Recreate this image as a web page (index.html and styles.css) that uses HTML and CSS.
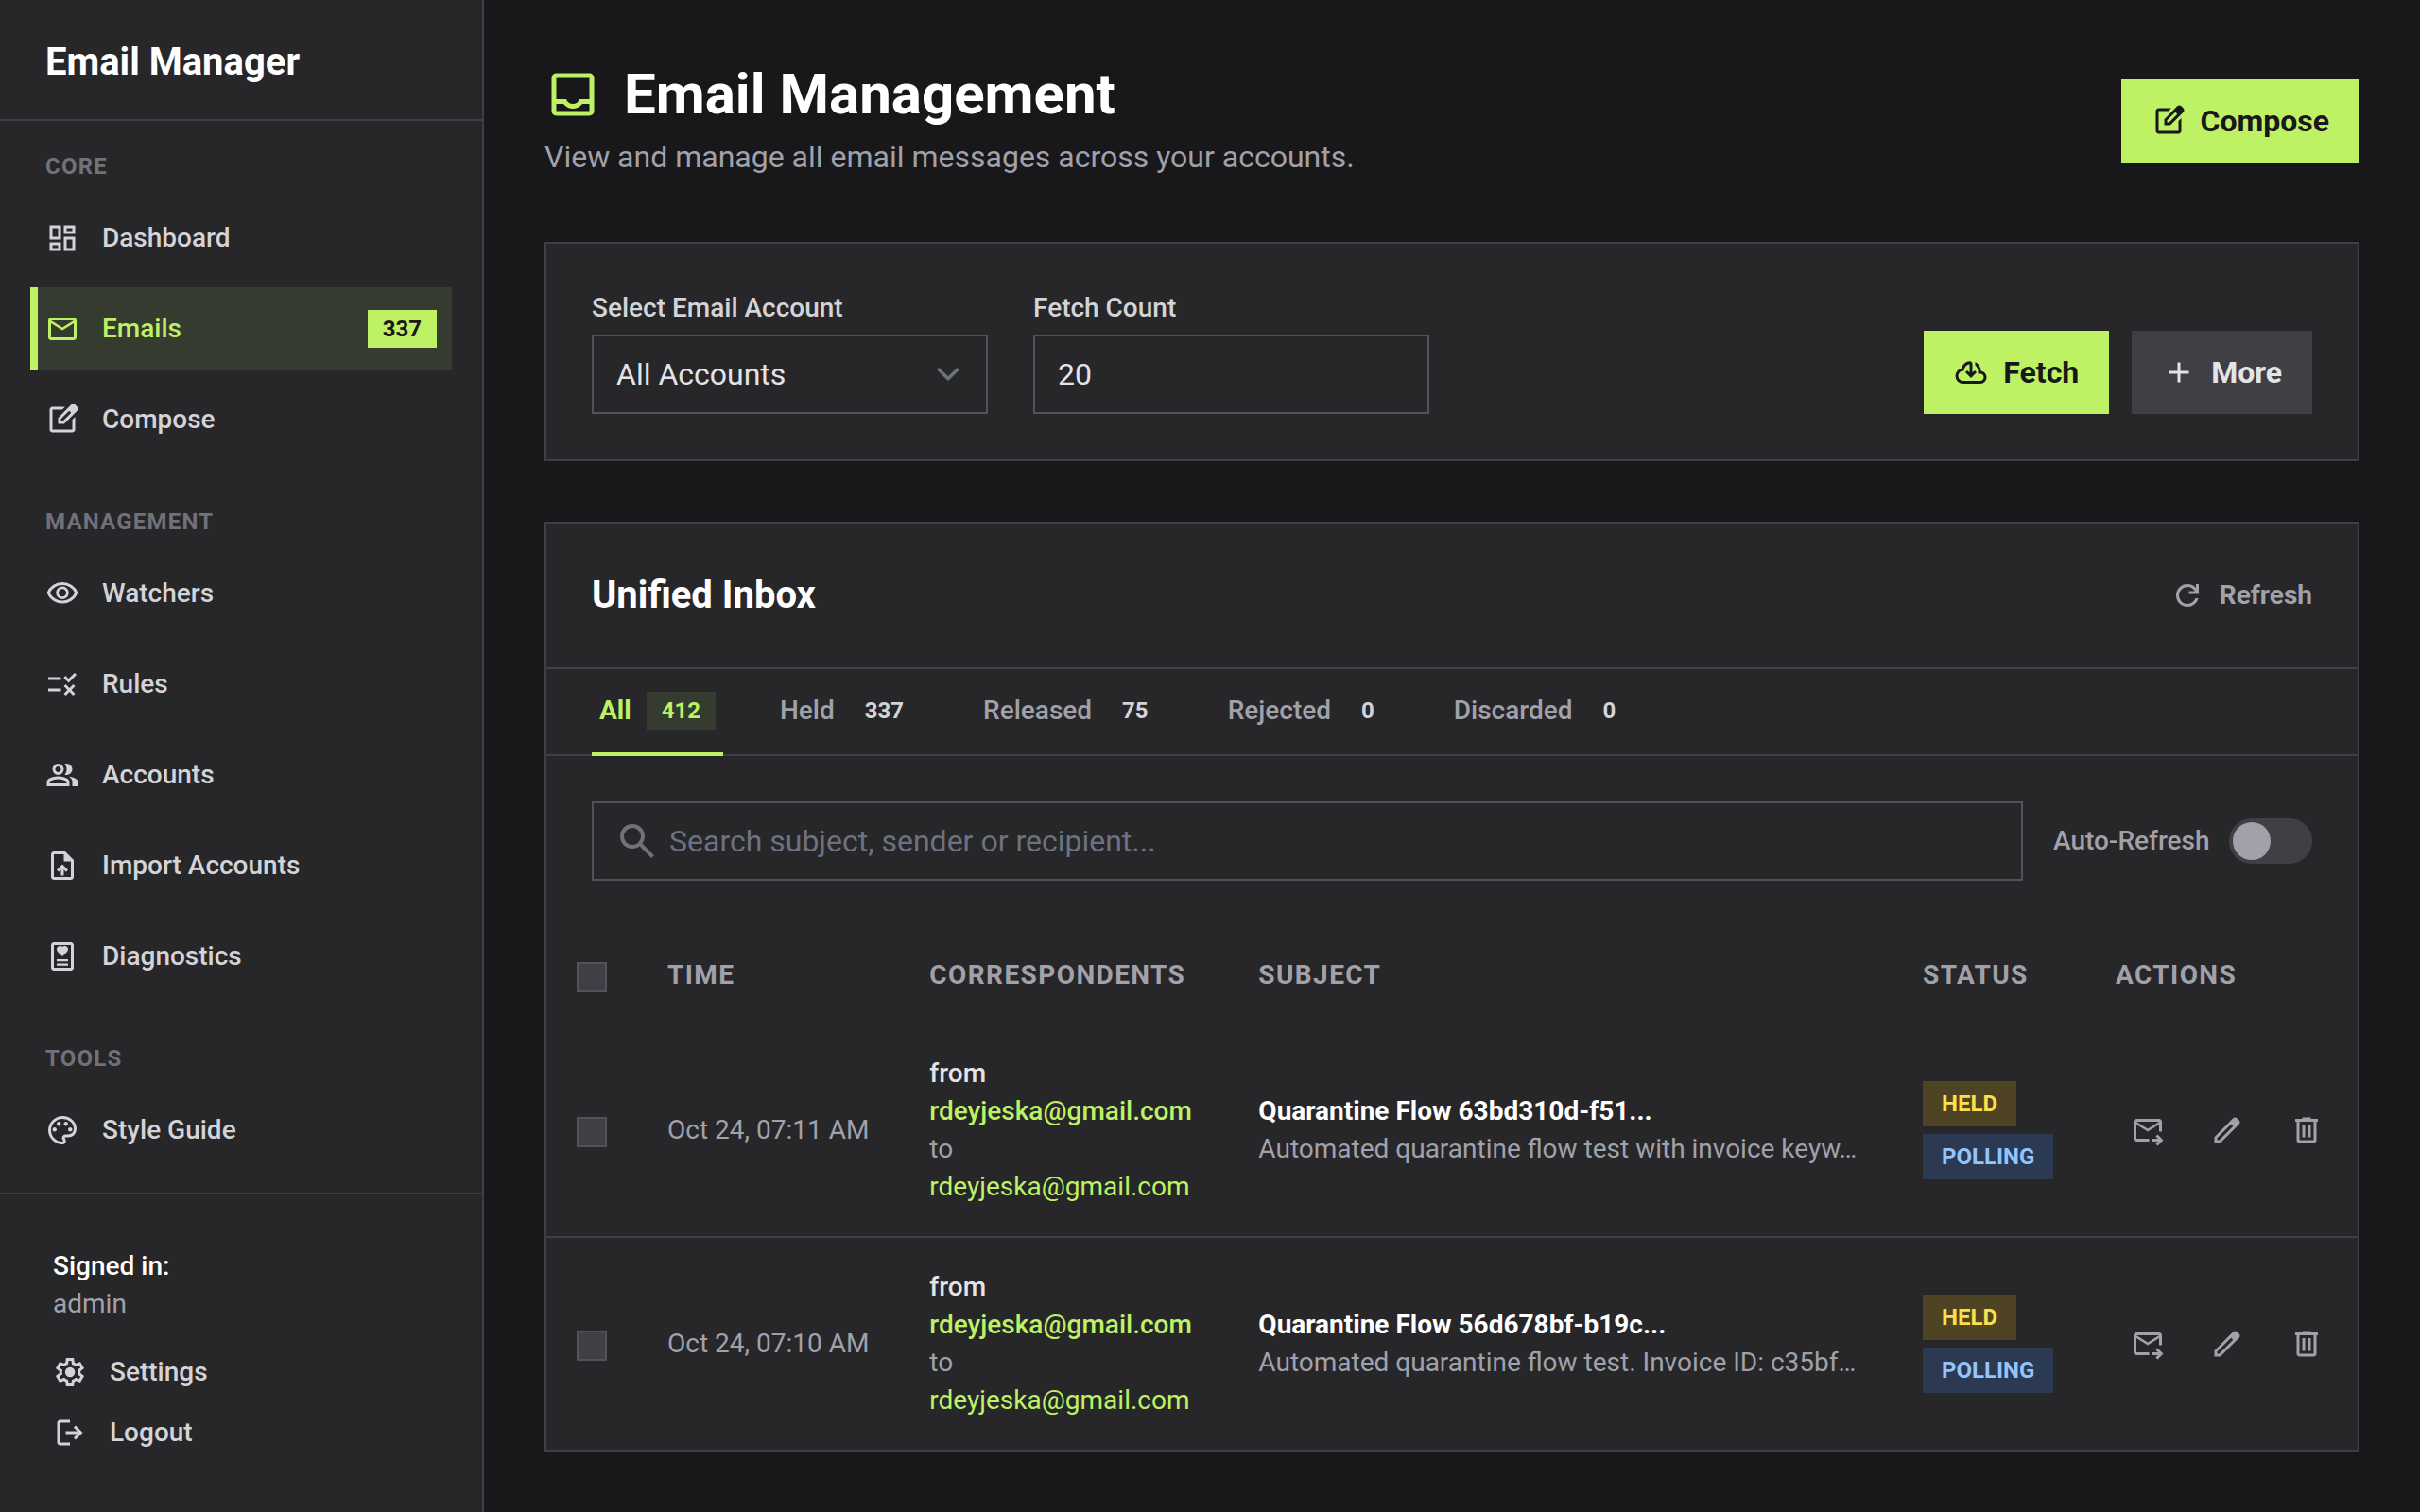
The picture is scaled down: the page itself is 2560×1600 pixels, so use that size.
FILE: index.html
```html
<!DOCTYPE html>
<html lang="en">
<head>
<meta charset="utf-8">
<title>Email Management</title>
<link rel="stylesheet" href="styles.css">
</head>
<body>
<svg class="sprite" aria-hidden="true">
  <symbol id="i-dashboard" viewBox="0 -960 960 960"><path d="M520-600v-240h320v240H520ZM120-440v-400h320v400H120Zm400 320v-400h320v400H520Zm-400 0v-240h320v240H120Zm80-400h160v-240H200v240Zm400 320h160v-240H600v240Zm0-480h160v-80H600v80ZM200-200h160v-80H200v80Z"/></symbol>
  <symbol id="i-mail" viewBox="0 -960 960 960"><path d="M160-160q-33 0-56.5-23.5T80-240v-480q0-33 23.5-56.5T160-800h640q33 0 56.5 23.5T880-720v480q0 33-23.5 56.5T800-160H160Zm320-280L160-640v400h640v-400L480-440Zm0-80 320-200H160l320 200ZM160-640v-80 480-400Z"/></symbol>
  <symbol id="i-compose" viewBox="0 -960 960 960"><path d="M200-120q-33 0-56.5-23.5T120-200v-560q0-33 23.5-56.5T200-840h357l-80 80H200v560h560v-278l80-80v358q0 33-23.5 56.5T760-120H200Zm280-360ZM360-360v-170l367-367q12-12 27-18t30-6q16 0 30.5 6t26.5 18l56 57q11 12 17 26.5t6 29.5q0 15-5.5 29.5T897-728L530-360H360Zm481-424-56-56 56 56ZM440-440h56l232-232-28-28-29-28-231 231v57Zm260-260-29-28 29 28 28 28-28-28Z"/></symbol>
  <symbol id="i-eye" viewBox="0 -960 960 960"><path d="M480-320q75 0 127.5-52.5T660-500q0-75-52.5-127.5T480-680q-75 0-127.5 52.5T300-500q0 75 52.5 127.5T480-320Zm0-72q-45 0-76.5-31.5T372-500q0-45 31.5-76.5T480-608q45 0 76.5 31.5T588-500q0 45-31.5 76.5T480-392Zm0 192q-146 0-266-81.5T40-500q54-137 174-218.5T480-800q146 0 266 81.5T920-500q-54 137-174 218.5T480-200Zm0-300Zm0 220q113 0 207.5-59.5T832-500q-50-101-144.5-160.5T480-720q-113 0-207.5 59.5T128-500q50 101 144.5 160.5T480-280Z"/></symbol>
  <symbol id="i-rule" viewBox="0 -960 960 960"><path d="m576-160-56-56 104-104-104-104 56-56 104 104 104-104 56 56-104 104 104 104-56 56-104-104-104 104Zm79-360L513-662l56-56 85 85 170-170 56 57-225 226ZM80-280v-80h360v80H80Zm0-320v-80h360v80H80Z"/></symbol>
  <symbol id="i-group" viewBox="0 -960 960 960"><path d="M40-160v-112q0-34 17.5-62.5T104-378q62-31 126-46.5T360-440q66 0 130 15.5T616-378q29 15 46.5 43.5T680-272v112H40Zm720 0v-120q0-44-24.5-84.5T666-434q51 6 96 20.5t84 35.5q36 20 55 44.5t19 53.5v120H760ZM360-480q-66 0-113-47t-47-113q0-66 47-113t113-47q66 0 113 47t47 113q0 66-47 113t-113 47Zm400-160q0 66-47 113t-113 47q-11 0-28-2.5t-28-5.5q27-32 41.5-71t14.5-81q0-42-14.5-81T544-792q14-5 28-6.5t28-1.5q66 0 113 47t47 113ZM120-240h480v-32q0-11-5.5-20T580-306q-54-27-109-40.5T360-360q-56 0-111 13.5T140-306q-9 5-14.5 14t-5.5 20v32Zm240-320q33 0 56.5-23.5T440-640q0-33-23.5-56.5T360-720q-33 0-56.5 23.5T280-640q0 33 23.5 56.5T360-560Z"/></symbol>
  <symbol id="i-upload" viewBox="0 -960 960 960"><path d="M440-200h80v-167l64 64 56-57-160-160-160 160 57 56 63-63v167ZM240-80q-33 0-56.5-23.5T160-160v-640q0-33 23.5-56.5T240-880h320l240 240v480q0 33-23.5 56.5T720-80H240Zm280-520v-200H240v640h480v-440H520Z"/></symbol>
  <symbol id="i-diagnostics" viewBox="0 -960 960 960"><path fill-rule="evenodd" d="M240-80q-33 0-56.5-23.5T160-160v-640q0-33 23.5-56.5T240-880h480q33 0 56.5 23.5T800-800v640q0 33-23.5 56.5T720-80H240Zm0-80h480v-640H240v640Z"/><path d="M320-340v-60h320v60H320Zm0 120v-60h320v60H320Zm160-260q-62-55-98-91t-50-61q-12-23-12-52 0-38 27-65t65-27q19 0 37 8t31 22q13-14 31-22t37-8q38 0 65 27t27 65q0 29-12 52-14 25-50 61t-98 91Z"/></symbol>
  <symbol id="i-palette" viewBox="0 -960 960 960"><path d="M480-80q-82 0-155-31.5t-127.5-86Q143-252 111.5-325T80-480q0-83 32.5-156t88-127Q256-817 330-848.5T488-880q80 0 151 27.5t124.5 76q53.5 48.5 85 115T880-518q0 115-70 176.5T640-280h-74q-9 0-12.5 5t-3.5 11q0 12 15 34.5t15 51.5q0 50-27.5 74T480-80Zm0-400Zm-220 40q26 0 43-17t17-43q0-26-17-43t-43-17q-26 0-43 17t-17 43q0 26 17 43t43 17Zm120-160q26 0 43-17t17-43q0-26-17-43t-43-17q-26 0-43 17t-17 43q0 26 17 43t43 17Zm200 0q26 0 43-17t17-43q0-26-17-43t-43-17q-26 0-43 17t-17 43q0 26 17 43t43 17Zm120 160q26 0 43-17t17-43q0-26-17-43t-43-17q-26 0-43 17t-17 43q0 26 17 43t43 17ZM480-160q9 0 14.5-5t5.5-13q0-14-15-33t-15-57q0-42 29-67t71-25h70q66 0 113-38.5T800-518q0-121-92.5-201.5T488-800q-136 0-232 93t-96 227q0 133 93.5 226.5T480-160Z"/></symbol>
  <symbol id="i-settings" viewBox="0 -960 960 960"><path d="m370-80-16-128q-13-5-24.5-12T307-235l-119 50L78-375l103-78q-1-7-1-13.5v-27q0-6.5 1-13.5L78-585l110-190 119 50q11-8 23-15t24-12l16-128h220l16 128q13 5 24.5 12t22.5 15l119-50 110 190-103 78q1 7 1 13.5v27q0 6.5-2 13.5l103 78-110 190-118-50q-11 8-23 15t-24 12L590-80H370Zm70-80h79l14-106q31-8 57.5-23.5T639-327l99 41 39-68-86-65q5-14 7-29.5t2-31.5q0-16-2-31.5t-7-29.5l86-65-39-68-99 42q-22-23-48.5-38.5T533-694l-13-106h-79l-14 106q-31 8-57.5 23.5T321-633l-99-41-39 68 86 64q-5 15-7 30t-2 32q0 16 2 31t7 30l-86 65 39 68 99-42q22 23 48.5 38.5T427-266l13 106Zm42-180q58 0 99-41t41-99q0-58-41-99t-99-41q-59 0-99.5 41T342-480q0 58 40.5 99t99.5 41Zm-2-140Z"/></symbol>
  <symbol id="i-logout" viewBox="0 -960 960 960"><path d="M200-120q-33 0-56.5-23.5T120-200v-560q0-33 23.5-56.5T200-840h280v80H200v560h280v80H200Zm440-160-55-58 102-102H360v-80h327L585-622l55-58 200 200-200 200Z"/></symbol>
  <symbol id="i-inbox" viewBox="0 -960 960 960"><path d="M200-120q-33 0-56.5-23.5T120-200v-560q0-33 23.5-56.5T200-840h560q33 0 56.5 23.5T840-760v560q0 33-23.5 56.5T760-120H200Zm0-80h560v-120H640q-30 38-71.5 59T480-240q-47 0-88.5-21T320-320H200v120Zm280-120q38 0 69-22t43-58h168v-360H200v360h168q12 36 43 58t69 22Z"/></symbol>
  <symbol id="i-cloud" viewBox="0 -960 960 960"><path d="M260-160q-91 0-155.5-63T40-377q0-78 47-139t123-78q17-72 85-137t145-65q33 0 56.5 23.5T520-716v242l64-62 56 56-160 160-160-160 56-56 64 62v-242q-76 14-118 73.5T280-520h-20q-58 0-99 41t-41 99q0 58 41 99t99 41h480q42 0 71-29t29-71q0-42-29-71t-71-29h-60v-80q0-48-22-89.5T600-680v-93q74 35 117 103.5T760-520q69 8 114.5 59.5T920-340q0 75-52.5 127.5T740-160H260Z"/></symbol>
  <symbol id="i-add" viewBox="0 -960 960 960"><path d="M440-440H200v-80h240v-240h80v240h240v80H520v240h-80v-240Z"/></symbol>
  <symbol id="i-refresh" viewBox="0 -960 960 960"><path d="M480-160q-134 0-227-93t-93-227q0-134 93-227t227-93q69 0 132 28.5T720-690v-110h80v280H520v-80h168q-32-56-87.5-88T480-720q-100 0-170 70t-70 170q0 100 70 170t170 70q77 0 139-44t87-116h84q-28 106-114 173t-196 67Z"/></symbol>
  <symbol id="i-search" viewBox="0 -960 960 960"><path d="M784-120 532-372q-30 24-69 38t-83 14q-109 0-184.5-75.5T120-580q0-109 75.5-184.5T380-840q109 0 184.5 75.5T640-580q0 44-14 83t-38 69l252 252-56 56ZM380-400q75 0 127.5-52.5T560-580q0-75-52.5-127.5T380-760q-75 0-127.5 52.5T200-580q0 75 52.5 127.5T380-400Z"/></symbol>
  <symbol id="i-forward" viewBox="0 -960 960 960"><path d="M160-160q-33 0-56.5-23.5T80-240v-480q0-33 23.5-56.5T160-800h640q33 0 56.5 23.5T880-720v280h-80v-200L480-440 160-640v400h360v80H160Zm320-360 320-200H160l320 200ZM760-40l-56-56 63-64H600v-80h167l-64-64 57-56 160 160L760-40Z"/></symbol>
  <symbol id="i-edit" viewBox="0 -960 960 960"><path d="M200-200h57l391-391-57-57-391 391v57Zm-80 80v-170l528-527q12-11 26.5-17t30.5-6q16 0 31 6t26 18l55 56q12 11 17.5 26t5.5 30q0 16-5.5 30.5T817-647L290-120H120Zm640-584-56-56 56 56Zm-141 85-28-29 57 57-29-28Z"/></symbol>
  <symbol id="i-delete" viewBox="0 -960 960 960"><path d="M280-120q-33 0-56.5-23.5T200-200v-520h-40v-80h200v-40h240v40h200v80h-40v520q0 33-23.5 56.5T680-120H280Zm400-600H280v520h400v-520ZM360-280h80v-360h-80v360Zm160 0h80v-360h-80v360Z"/></symbol>
</svg>

<div class="app">
  <aside class="sidebar">
    <div class="brand">Email Manager</div>
    <nav class="nav">
      <section class="nav-group">
        <h2 class="nav-label">CORE</h2>
        <a class="nav-item" href="#dashboard"><svg class="icon"><use href="#i-dashboard"/></svg>Dashboard</a>
        <a class="nav-item active" href="#emails" aria-current="page"><svg class="icon"><use href="#i-mail"/></svg>Emails<span class="count nav-count">337</span></a>
        <a class="nav-item" href="#compose"><svg class="icon"><use href="#i-compose"/></svg>Compose</a>
      </section>
      <section class="nav-group">
        <h2 class="nav-label">MANAGEMENT</h2>
        <a class="nav-item" href="#watchers"><svg class="icon"><use href="#i-eye"/></svg>Watchers</a>
        <a class="nav-item" href="#rules"><svg class="icon"><use href="#i-rule"/></svg>Rules</a>
        <a class="nav-item" href="#accounts"><svg class="icon"><use href="#i-group"/></svg>Accounts</a>
        <a class="nav-item" href="#import"><svg class="icon"><use href="#i-upload"/></svg>Import Accounts</a>
        <a class="nav-item" href="#diagnostics"><svg class="icon"><use href="#i-diagnostics"/></svg>Diagnostics</a>
      </section>
      <section class="nav-group">
        <h2 class="nav-label">TOOLS</h2>
        <a class="nav-item" href="#style-guide"><svg class="icon"><use href="#i-palette"/></svg>Style Guide</a>
      </section>
    </nav>
    <footer class="account">
      <div class="account-label">Signed in:</div>
      <div class="account-name">admin</div>
      <div class="account-links">
        <a class="account-link" href="#settings"><svg class="icon"><use href="#i-settings"/></svg>Settings</a>
        <a class="account-link" href="#logout"><svg class="icon"><use href="#i-logout"/></svg>Logout</a>
      </div>
    </footer>
  </aside>

  <main class="main">
    <header class="page-header">
      <div>
        <h1 class="page-title"><svg class="icon title-icon"><use href="#i-inbox"/></svg>Email Management</h1>
        <p class="page-subtitle">View and manage all email messages across your accounts.</p>
      </div>
      <button class="btn btn-primary" type="button"><svg class="icon"><use href="#i-compose"/></svg>Compose</button>
    </header>

    <form class="card fetch-form">
      <div class="field">
        <label class="field-label" for="account">Select Email Account</label>
        <div class="overlay-field">
          <select class="control select" id="account"><option>All Accounts</option></select>
          <svg class="chevron" viewBox="0 0 20 20" aria-hidden="true"><path d="M6 8l4 4 4-4"/></svg>
        </div>
      </div>
      <div class="field">
        <label class="field-label" for="fetch-count">Fetch Count</label>
        <input class="control" id="fetch-count" type="text" inputmode="numeric" value="20">
      </div>
      <div class="form-actions">
        <button class="btn btn-primary" type="button"><svg class="icon"><use href="#i-cloud"/></svg>Fetch</button>
        <button class="btn btn-secondary" type="button"><svg class="icon"><use href="#i-add"/></svg>More</button>
      </div>
    </form>

    <section class="card">
      <div class="inbox-header">
        <h2 class="inbox-title">Unified Inbox</h2>
        <button class="btn-text" type="button"><svg class="icon"><use href="#i-refresh"/></svg>Refresh</button>
      </div>
      <div class="tabs">
        <button class="tab active" type="button">All<span class="count">412</span></button>
        <button class="tab" type="button">Held<span class="count">337</span></button>
        <button class="tab" type="button">Released<span class="count">75</span></button>
        <button class="tab" type="button">Rejected<span class="count">0</span></button>
        <button class="tab" type="button">Discarded<span class="count">0</span></button>
      </div>
      <div class="toolbar">
        <div class="overlay-field search">
          <input class="control search-input" type="search" aria-label="Search emails" placeholder="Search subject, sender or recipient...">
          <svg class="icon search-icon"><use href="#i-search"/></svg>
        </div>
        <label class="switch-label">Auto-Refresh<input class="switch" type="checkbox" role="switch"></label>
      </div>
      <table class="emails">
        <thead>
          <tr>
            <th><input class="checkbox" type="checkbox" aria-label="Select all"></th>
            <th>TIME</th>
            <th class="col-people">CORRESPONDENTS</th>
            <th class="col-subject">SUBJECT</th>
            <th class="col-status">STATUS</th>
            <th class="col-actions">ACTIONS</th>
          </tr>
        </thead>
        <tbody>
          <tr>
            <td><input class="checkbox" type="checkbox" aria-label="Select email"></td>
            <td>Oct 24, 07:11 AM</td>
            <td>
              <div class="from">from</div>
              <div class="from address">rdeyjeska@gmail.com</div>
              <div>to</div>
              <div class="address">rdeyjeska@gmail.com</div>
            </td>
            <td class="col-subject">
              <div class="subject">Quarantine Flow 63bd310d-f51...</div>
              <div>Automated quarantine flow test with invoice keyw…</div>
            </td>
            <td>
              <div class="badges"><span class="badge badge-held">HELD</span><span class="badge badge-polling">POLLING</span></div>
            </td>
            <td class="col-actions">
              <div class="row-actions">
                <button class="icon-btn" type="button" aria-label="Release"><svg class="icon"><use href="#i-forward"/></svg></button>
                <button class="icon-btn" type="button" aria-label="Edit"><svg class="icon"><use href="#i-edit"/></svg></button>
                <button class="icon-btn" type="button" aria-label="Discard"><svg class="icon"><use href="#i-delete"/></svg></button>
              </div>
            </td>
          </tr>
          <tr>
            <td><input class="checkbox" type="checkbox" aria-label="Select email"></td>
            <td>Oct 24, 07:10 AM</td>
            <td>
              <div class="from">from</div>
              <div class="from address">rdeyjeska@gmail.com</div>
              <div>to</div>
              <div class="address">rdeyjeska@gmail.com</div>
            </td>
            <td class="col-subject">
              <div class="subject">Quarantine Flow 56d678bf-b19c...</div>
              <div>Automated quarantine flow test. Invoice ID: c35bf…</div>
            </td>
            <td>
              <div class="badges"><span class="badge badge-held">HELD</span><span class="badge badge-polling">POLLING</span></div>
            </td>
            <td class="col-actions">
              <div class="row-actions">
                <button class="icon-btn" type="button" aria-label="Release"><svg class="icon"><use href="#i-forward"/></svg></button>
                <button class="icon-btn" type="button" aria-label="Edit"><svg class="icon"><use href="#i-edit"/></svg></button>
                <button class="icon-btn" type="button" aria-label="Discard"><svg class="icon"><use href="#i-delete"/></svg></button>
              </div>
            </td>
          </tr>
        </tbody>
      </table>
    </section>
  </main>
</div>
</body>
</html>
```
FILE: styles.css
```css
:root {
  --bg: #18181b;
  --surface: #27272a;
  --line: #3f3f46;
  --control-line: #52525b;
  --muted: #71717a;
  --text-dim: #a1a1aa;
  --text-soft: #d4d4d8;
  --text: #e4e4e7;
  --accent: #bef264;
  --accent-tint: #363b30;
}

*, *::before { box-sizing: border-box; }

body {
  margin: 0;
  background: var(--bg);
  color: var(--text);
  font: 400 28px/40px Roboto, "Liberation Sans", sans-serif;
}

h1, h2, p { margin: 0; }
a { color: inherit; text-decoration: none; }
button, input, select { font: inherit; color: inherit; margin: 0; border-radius: 0; }
button { border: 0; background: none; cursor: pointer; }

.sprite { display: none; }
.icon { width: 36px; height: 36px; fill: currentColor; flex: none; display: block; }

.app { display: flex; min-height: 100vh; }

/* Sidebar */
.sidebar {
  flex: none;
  width: 512px;
  display: flex;
  flex-direction: column;
  background: var(--surface);
  border-right: 2px solid var(--line);
}
.brand {
  padding: 38px 48px 32px;
  border-bottom: 2px solid var(--line);
  color: #fff;
  font-size: 40px;
  font-weight: 700;
  line-height: 56px;
}
.nav {
  flex: 1;
  display: flex;
  flex-direction: column;
  gap: 48px;
  padding: 32px 32px 22px;
}
.nav-group { display: flex; flex-direction: column; gap: 8px; }
.nav-label {
  padding: 0 16px 8px;
  color: var(--muted);
  font-size: 24px;
  font-weight: 700;
  line-height: 32px;
  letter-spacing: 0.05em;
}
.nav-item {
  display: flex;
  align-items: center;
  gap: 24px;
  padding: 24px 16px 24px 8px;
  border-left: 8px solid transparent;
  color: var(--text-soft);
  font-weight: 500;
}
.nav-item.active {
  border-left-color: var(--accent);
  background: var(--accent-tint);
  color: var(--accent);
}
.count {
  padding: 4px 16px;
  font-size: 24px;
  font-weight: 700;
  line-height: 32px;
}
.nav-count { margin-left: auto; background: var(--accent); color: var(--bg); }
.account { padding: 56px 56px 64px; border-top: 2px solid var(--line); }
.account-label { color: #fff; font-weight: 500; }
.account-name { color: var(--text-dim); }
.account-links { display: flex; flex-direction: column; gap: 24px; margin-top: 32px; }
.account-link { display: flex; align-items: center; gap: 24px; color: var(--text-soft); font-weight: 500; }

/* Main column */
.main {
  flex: 1;
  min-width: 0;
  display: flex;
  flex-direction: column;
  gap: 64px;
  padding: 64px;
}
.page-header { display: flex; justify-content: space-between; align-items: center; }
.page-title {
  display: flex;
  align-items: center;
  gap: 24px;
  color: #fff;
  font-size: 60px;
  font-weight: 700;
  line-height: 72px;
}
.title-icon { width: 60px; height: 60px; color: var(--accent); }
.page-subtitle { padding: 6px 0 2px; color: var(--text-dim); font-size: 32px; line-height: 48px; }

.btn {
  display: inline-flex;
  align-items: center;
  gap: 16px;
  padding: 24px 32px;
  font-size: 32px;
  font-weight: 700;
  line-height: 40px;
}
.btn-primary { background: var(--accent); color: var(--bg); box-shadow: 0 2px 4px rgb(0 0 0 / 5%); }
.btn-secondary { background: var(--line); color: var(--text); }
.btn-text {
  display: inline-flex;
  align-items: center;
  gap: 16px;
  padding: 0;
  color: var(--text-dim);
  font-weight: 700;
}

.card { background: var(--surface); border: 2px solid var(--line); }

/* Fetch form */
.fetch-form {
  display: grid;
  grid-template-columns: repeat(4, 1fr);
  align-items: end;
  gap: 48px;
  padding: 48px;
}
.field { display: flex; flex-direction: column; gap: 8px; }
.field-label { color: var(--text-soft); font-weight: 500; }
.control {
  width: 100%;
  padding: 16px 24px;
  border: 2px solid var(--control-line);
  background: var(--surface);
  font-size: 32px;
  line-height: 48px;
  appearance: none;
  outline: 0;
}
.overlay-field { display: grid; align-items: center; }
.overlay-field > * { grid-area: 1 / 1; }
.select { height: 84px; }
.chevron {
  justify-self: end;
  width: 48px;
  height: 48px;
  margin-right: 18px;
  fill: none;
  stroke: #6b7280;
  stroke-width: 1.5;
  stroke-linecap: round;
  stroke-linejoin: round;
  pointer-events: none;
}
.form-actions { grid-column: span 2; display: flex; justify-content: flex-end; gap: 24px; }

/* Inbox */
.inbox-header {
  display: flex;
  justify-content: space-between;
  align-items: center;
  padding: 48px;
  border-bottom: 2px solid var(--line);
}
.inbox-title { color: #fff; font-size: 40px; font-weight: 700; line-height: 56px; }
.tabs { display: flex; gap: 52px; padding: 0 48px; border-bottom: 2px solid var(--line); }
.tab {
  display: flex;
  align-items: center;
  gap: 16px;
  padding: 24px 8px;
  margin-bottom: -2px;
  border-bottom: 4px solid transparent;
  color: var(--text-dim);
  font-weight: 500;
}
.tab .count { color: var(--text-soft); }
.tab.active { border-bottom-color: var(--accent); color: var(--accent); font-weight: 700; }
.tab.active .count { background: var(--accent-tint); color: var(--accent); }

.toolbar { display: flex; align-items: center; gap: 32px; padding: 48px; }
.search { flex: 1; }
.search-input { padding-left: 80px; }
.search-input::placeholder { color: #6b7280; opacity: 1; }
.search-icon { width: 48px; height: 48px; margin-left: 24px; color: var(--muted); pointer-events: none; }
.switch-label {
  display: flex;
  align-items: center;
  justify-content: space-between;
  gap: 16px;
  min-width: 274px;
  color: var(--text-dim);
  font-weight: 500;
}
.switch {
  appearance: none;
  width: 88px;
  height: 48px;
  padding: 4px;
  border-radius: 24px;
  background: var(--line);
}
.switch::before {
  content: "";
  display: block;
  width: 40px;
  height: 40px;
  border-radius: 50%;
  background: var(--text-dim);
}

.emails { width: 100%; border-collapse: collapse; color: var(--text-dim); }
.emails th, .emails td { padding: 32px; text-align: left; vertical-align: middle; white-space: nowrap; }
.emails th { font-weight: 700; letter-spacing: 0.05em; }
.emails tbody tr + tr { border-top: 2px solid var(--line); }
.emails .col-people { min-width: 348px; }
.emails .col-status { min-width: 204px; }
.emails .col-subject { width: 100%; }
.emails .col-actions { padding-right: 20px; }
.checkbox {
  appearance: none;
  width: 32px;
  height: 32px;
  border: 2px solid var(--control-line);
  background: var(--line);
  vertical-align: middle;
}
.from { color: var(--text); font-weight: 500; }
.address { color: var(--accent); }
.subject { color: #fff; font-weight: 700; }
.badges { display: flex; flex-direction: column; align-items: flex-start; gap: 8px; }
.badge { padding: 8px 20px; font-size: 24px; font-weight: 700; line-height: 32px; }
.badge-held { background: #4e4323; color: #fde047; }
.badge-polling { background: #2b3953; color: #93c5fd; }
.row-actions { display: flex; gap: 16px; }
.icon-btn { padding: 16px; color: var(--text-dim); }
```
